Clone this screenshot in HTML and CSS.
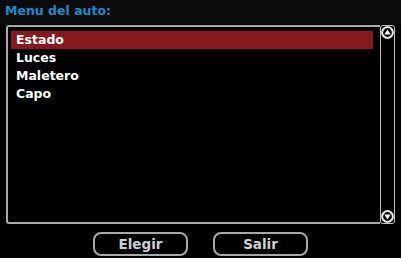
FILE: index.html
```html
<!DOCTYPE html>
<html>
  <head>
    <meta charset="UTF-8" />
    <title>Menu del auto</title>
    <link rel="stylesheet" href="styles.css">
  </head>
  <body>
    <div class="header">
      <div class="title">Menu del auto:</div>
    </div>

    <div class="panel">
      <div class="list">
        <div class="item selected">Estado</div>
        <div class="item">Luces</div>
        <div class="item">Maletero</div>
        <div class="item">Capo</div>
      </div>
      <div class="scrollbar">
        <svg class="arrow" width="13" height="13" viewBox="0 0 13 13">
          <circle cx="6.5" cy="6.5" r="5.4" fill="none" stroke="#e6e6e6" stroke-width="2" />
          <path d="M3.3 8.6 L6.5 3.4 L9.7 8.6 Z" fill="#f4f4f4" />
        </svg>
        <svg class="arrow" width="13" height="13" viewBox="0 0 13 13">
          <circle cx="6.5" cy="6.5" r="5.4" fill="none" stroke="#e6e6e6" stroke-width="2" />
          <path d="M3.3 4.4 L6.5 9.6 L9.7 4.4 Z" fill="#f4f4f4" />
        </svg>
      </div>
    </div>

    <div class="buttons">
      <button class="button">Elegir</button>
      <button class="button">Salir</button>
    </div>
  </body>
</html>
```

FILE: styles.css
```css
body {
  background-color: #000;
  color: white;
  font-family: "DejaVu Sans", Verdana, sans-serif;
  font-weight: bold;
  margin: 0;
  padding: 0;
  width: 401px;
  height: 258px;
  overflow: hidden;
}

.header {
  background-color: #0b0b0b;
  height: 24px;
  padding-left: 5px;
  box-sizing: border-box;
}

.title {
  color: #1b8bcb;
  font-size: 12.5px;
  line-height: 22px;
}

.panel {
  display: flex;
  margin-top: 1px;
  margin-left: 6px;
  height: 199px;
}

.list {
  width: 374px;
  border: 2px solid #a8a8a8;
  border-right: none;
  border-radius: 3px 0 0 3px;
  padding: 4px 7px 0 3px;
  box-sizing: border-box;
}

.item {
  height: 18px;
  line-height: 18px;
  font-size: 12.5px;
  padding-left: 5px;
}

.item.selected {
  background-color: #861a1f;
}

.scrollbar {
  width: 15px;
  border: 1.5px solid #c0c0c0;
  border-radius: 3px;
  box-sizing: border-box;
  display: flex;
  flex-direction: column;
  justify-content: space-between;
  align-items: center;
}

.arrow {
  display: block;
}

.buttons {
  display: flex;
  justify-content: center;
  gap: 25px;
  margin-top: 8px;
}

.button {
  width: 95px;
  height: 24px;
  border: 2px solid #a8a8a8;
  border-radius: 8px;
  background-color: #000;
  color: #cfcfcf;
  font-family: "DejaVu Sans", Verdana, sans-serif;
  font-weight: bold;
  font-size: 13.5px;
  padding: 0;
}
```
